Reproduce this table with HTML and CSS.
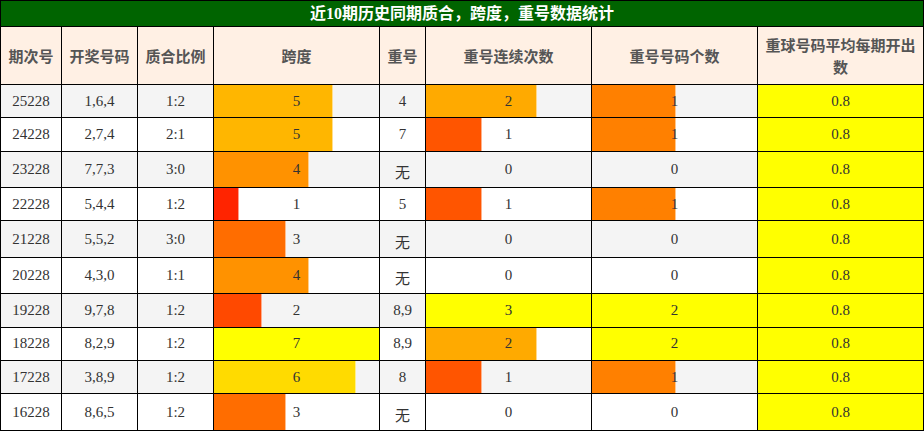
FILE: index.html
```html
<!DOCTYPE html>
<html lang="zh-CN">
<head>
<meta charset="utf-8">
<title>近10期历史同期质合，跨度，重号数据统计</title>
<link rel="stylesheet" href="styles.css">
</head>
<body>
<section class="board">
  <div class="title">近10期历史同期质合，跨度，重号数据统计</div>
  <div class="row head">
    <div class="c">期次号</div>
    <div class="c">开奖号码</div>
    <div class="c">质合比例</div>
    <div class="c">跨度</div>
    <div class="c">重号</div>
    <div class="c">重号连续次数</div>
    <div class="c">重号号码个数</div>
    <div class="c wrap">重球号码平均每期开出数</div>
  </div>

  <div class="row alt">
    <div class="c">25228</div><div class="c">1,6,4</div><div class="c">1:2</div>
    <div class="c bar" style="--w:71.43%;--c:#ffb600">5</div>
    <div class="c">4</div>
    <div class="c bar" style="--w:66.67%;--c:#ffaa00">2</div>
    <div class="c bar" style="--w:50%;--c:#ff8000">1</div>
    <div class="c avg">0.8</div>
  </div>
  <div class="row">
    <div class="c">24228</div><div class="c">2,7,4</div><div class="c">2:1</div>
    <div class="c bar" style="--w:71.43%;--c:#ffb600">5</div>
    <div class="c">7</div>
    <div class="c bar" style="--w:33.33%;--c:#ff5500">1</div>
    <div class="c bar" style="--w:50%;--c:#ff8000">1</div>
    <div class="c avg">0.8</div>
  </div>
  <div class="row alt tall">
    <div class="c">23228</div><div class="c">7,7,3</div><div class="c">3:0</div>
    <div class="c bar" style="--w:57.14%;--c:#ff9200">4</div>
    <div class="c none">无</div>
    <div class="c">0</div>
    <div class="c">0</div>
    <div class="c avg">0.8</div>
  </div>
  <div class="row">
    <div class="c">22228</div><div class="c">5,4,4</div><div class="c">1:2</div>
    <div class="c bar" style="--w:14.29%;--c:#ff2400">1</div>
    <div class="c">5</div>
    <div class="c bar" style="--w:33.33%;--c:#ff5500">1</div>
    <div class="c bar" style="--w:50%;--c:#ff8000">1</div>
    <div class="c avg">0.8</div>
  </div>
  <div class="row alt tall">
    <div class="c">21228</div><div class="c">5,5,2</div><div class="c">3:0</div>
    <div class="c bar" style="--w:42.86%;--c:#ff6d00">3</div>
    <div class="c none">无</div>
    <div class="c">0</div>
    <div class="c">0</div>
    <div class="c avg">0.8</div>
  </div>
  <div class="row tall">
    <div class="c">20228</div><div class="c">4,3,0</div><div class="c">1:1</div>
    <div class="c bar" style="--w:57.14%;--c:#ff9200">4</div>
    <div class="c none">无</div>
    <div class="c">0</div>
    <div class="c">0</div>
    <div class="c avg">0.8</div>
  </div>
  <div class="row alt">
    <div class="c">19228</div><div class="c">9,7,8</div><div class="c">1:2</div>
    <div class="c bar" style="--w:28.57%;--c:#ff4900">2</div>
    <div class="c">8,9</div>
    <div class="c full">3</div>
    <div class="c full">2</div>
    <div class="c avg">0.8</div>
  </div>
  <div class="row">
    <div class="c">18228</div><div class="c">8,2,9</div><div class="c">1:2</div>
    <div class="c full">7</div>
    <div class="c">8,9</div>
    <div class="c bar" style="--w:66.67%;--c:#ffaa00">2</div>
    <div class="c full">2</div>
    <div class="c avg">0.8</div>
  </div>
  <div class="row alt">
    <div class="c">17228</div><div class="c">3,8,9</div><div class="c">1:2</div>
    <div class="c bar" style="--w:85.71%;--c:#ffdb00">6</div>
    <div class="c">8</div>
    <div class="c bar" style="--w:33.33%;--c:#ff5500">1</div>
    <div class="c bar" style="--w:50%;--c:#ff8000">1</div>
    <div class="c avg">0.8</div>
  </div>
  <div class="row tall">
    <div class="c">16228</div><div class="c">8,6,5</div><div class="c">1:2</div>
    <div class="c bar" style="--w:42.86%;--c:#ff6d00">3</div>
    <div class="c none">无</div>
    <div class="c">0</div>
    <div class="c">0</div>
    <div class="c avg">0.8</div>
  </div>
</section>
</body>
</html>
```
FILE: styles.css
```css
html, body {
  margin: 0;
  padding: 0;
  background: #fff;
}

.board {
  width: 924px;
  box-sizing: border-box;
  border: 1px solid #000;
  background: #000;
  display: flex;
  flex-direction: column;
  gap: 1px;
  font-family: "Liberation Serif", "Noto Sans CJK SC", serif;
}

.title {
  height: 25px;
  line-height: 25px;
  background: #006400;
  color: #fff;
  font-weight: bold;
  font-size: 16px;
  text-align: center;
}

.row {
  display: grid;
  grid-template-columns: 60px 75px 75px 165px 45px 165px 165px 165px;
  column-gap: 1px;
  height: 32.33px;
}

.row.tall {
  height: 35.5px;
}

.row.head {
  height: 57px;
}

.c {
  display: flex;
  align-items: center;
  justify-content: center;
  text-align: center;
  background-color: #fff;
  color: #333;
  font-size: 15px;
  line-height: 17px;
}

.row.alt .c {
  background-color: #f4f4f4;
}

.head .c {
  background-color: #fff0e4;
  color: #555;
  font-weight: bold;
  font-family: "Noto Sans CJK SC", sans-serif;
  line-height: 22px;
}

.head .wrap {
  padding: 0 6px;
}

.none {
  font-family: "Noto Sans CJK SC", sans-serif;
  padding-top: 4px;
  box-sizing: border-box;
}

.bar {
  background-image: linear-gradient(to right,
    var(--c) 0 var(--w),
    color-mix(in srgb, var(--c) 45%, #fff) var(--w) calc(var(--w) + 1px),
    transparent calc(var(--w) + 1px));
}

.row .c.full,
.row .c.avg {
  background-color: #ffff00;
}
```
